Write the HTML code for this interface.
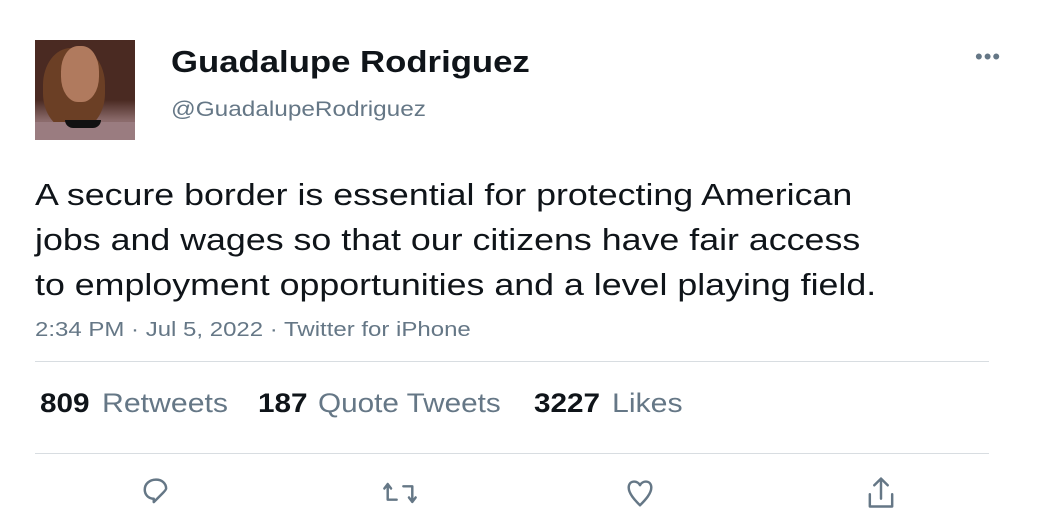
<!DOCTYPE html>
<html><head><style>
body{margin:0;width:1050px;height:525px;background:#fff;font-family:"Liberation Sans",sans-serif;position:relative;overflow:hidden}
.a{position:absolute;white-space:nowrap}
.s{transform-origin:0 0}
.av{left:35px;top:40px;width:100px;height:100px;background:linear-gradient(180deg,#4a2a22 0%,#4a2a22 60%,#8a6a6a 80%,#9a7a7e 100%);overflow:hidden}
.name{left:171px;top:44px;font-size:31px;font-weight:bold;color:#0f1419;transform:scaleX(1.12)}
.handle{left:171px;top:98px;font-size:21px;color:#657786;transform:scaleX(1.16)}
.txt{left:35px;top:172px;font-size:31px;line-height:45px;color:#0f1419;transform:scaleX(1.154)}
.meta{left:35px;top:319px;font-size:20px;color:#657786;transform:scaleX(1.2)}
.hr{left:35px;width:954px;height:1px;background:#d8dde1}
.st{top:388px;font-size:27px;color:#657786}
.st b{color:#0f1419}
svg{position:absolute;fill:none;stroke:#657786;stroke-width:2.2;stroke-linecap:round;stroke-linejoin:round}
</style></head><body>
<div class="a av">
<div class="a" style="left:8px;top:8px;width:62px;height:82px;border-radius:45%;background:#6b3f25"></div>
<div class="a" style="left:26px;top:6px;width:38px;height:56px;border-radius:45%;background:#b07a5e"></div>
<div class="a" style="left:0;top:82px;width:100px;height:18px;background:#9a7c80"></div>
<div class="a" style="left:30px;top:80px;width:36px;height:8px;border-radius:0 0 18px 18px;background:#111"></div>
</div>
<div class="a s name">Guadalupe Rodriguez</div>
<div class="a s handle">@GuadalupeRodriguez</div>
<div class="a" style="left:975px;top:44px;font-size:22px;color:#657786;letter-spacing:1px">•••</div>
<div class="a s txt">A secure border is essential for protecting American<br>jobs and wages so that our citizens have fair access<br>to employment opportunities and a level playing field.</div>
<div class="a s meta">2:34 PM · Jul 5, 2022 · Twitter for iPhone</div>
<div class="a hr" style="top:361px"></div>
<div class="a st s" style="left:40px;transform:scaleX(1.1)"><b>809</b></div>
<div class="a st s" style="left:102px;transform:scaleX(1.12)">Retweets</div>
<div class="a st s" style="left:258px;transform:scaleX(1.1)"><b>187</b></div>
<div class="a st s" style="left:318px;transform:scaleX(1.1)">Quote Tweets</div>
<div class="a st s" style="left:534px;transform:scaleX(1.1)"><b>3227</b></div>
<div class="a st s" style="left:612px;transform:scaleX(1.12)">Likes</div>
<div class="a hr" style="top:453px"></div>
<svg style="left:138px;top:474px" width="36" height="36" viewBox="0 0 32 32"><path d="M16 5c-6 0-10 4-10 9 0 4 3 8 8 8v3l7-7c2-2 4-4 4-5 0-5-4-8-9-8z"/></svg>
<svg style="left:381px;top:475px" width="38" height="36" viewBox="0 0 34 32"><path d="M6 8l-3 4M6 8l3 4M6 8v14h8M28 24l-3-4M28 24l3-4M28 24V10h-8"/></svg>
<svg style="left:621px;top:474px" width="38" height="38" viewBox="0 0 34 34"><path d="M17 10c-2-4-9-5-10 1-1 6 6 13 10 17 4-4 11-11 10-17-1-6-8-5-10-1z"/></svg>
<svg style="left:862px;top:473px" width="38" height="38" viewBox="0 0 34 34"><path d="M17 5v18M11 11l6-6 6 6M7 19v11h20V19"/></svg>
</body></html>
